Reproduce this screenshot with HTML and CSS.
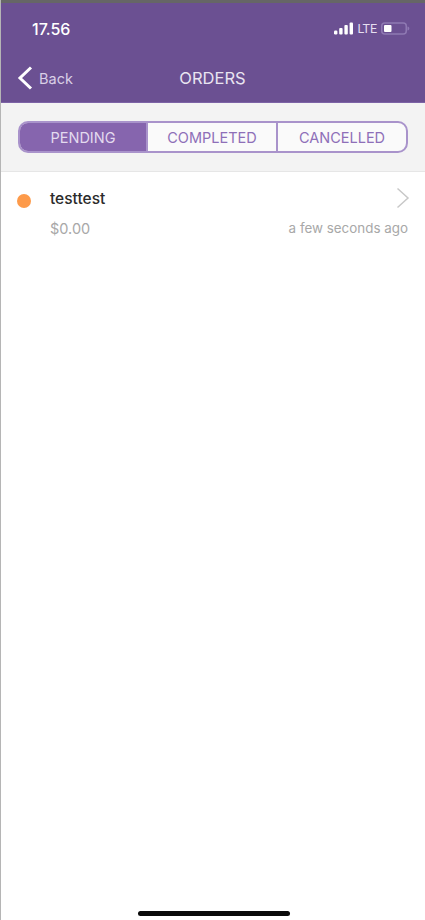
FILE: index.html
```html
<!DOCTYPE html>
<html lang="en">
<head>
    <meta charset="UTF-8">
    <meta name="viewport" content="width=device-width, initial-scale=1.0">
    <title>Orders</title>
    <link rel="stylesheet" href="styles.css">
</head>
<body>
    <div class="phone">
        <header class="header">
            <div class="status-bar">
                <span class="clock">17.56</span>
                <div class="status-icons">
                    <svg class="signal" width="20" height="13" viewBox="0 0 20 13">
                        <rect x="0" y="8.500" width="3.400" height="4" rx="1.200"/>
                        <rect x="5.200" y="6" width="3.400" height="6.500" rx="1"/>
                        <rect x="10.400" y="3" width="3.400" height="9.500" rx="1"/>
                        <rect x="15.600" y="0.500" width="3.400" height="12" rx="1"/>
                    </svg>
                    <span class="network">LTE</span>
                    <svg class="battery" width="29" height="13" viewBox="0 0 29 13">
                        <rect x="0.750" y="1" width="24.500" height="11" rx="3" class="battery-shell"/>
                        <rect x="3" y="3" width="7.500" height="7" rx="1" class="battery-level"/>
                        <path d="M26.500 4.500c1.300.3 1.800 1.100 1.800 2s-.5 1.700-1.800 2z" class="battery-cap"/>
                    </svg>
                </div>
            </div>
            <nav class="nav-bar">
                <a href="#" class="back">
                    <svg width="16" height="24" viewBox="0 0 16 24">
                        <path d="M14 1.500 3 12l11 10.500" fill="none" stroke="#fff" stroke-width="3"/>
                    </svg>
                    <span>Back</span>
                </a>
                <h1 class="title">ORDERS</h1>
            </nav>
        </header>

        <div class="tabs-wrap">
            <div class="tabs">
                <button class="tab tab-active">PENDING</button>
                <button class="tab tab-middle">COMPLETED</button>
                <button class="tab tab-last">CANCELLED</button>
            </div>
        </div>

        <div class="order">
            <span class="order-dot"></span>
            <div class="order-main">
                <div class="order-name">testtest</div>
                <div class="order-price">$0.00</div>
            </div>
            <div class="order-side">
                <svg class="order-arrow" width="14" height="22" viewBox="0 0 14 22">
                    <path d="M1.500 1.500 12 11 1.500 20.500" fill="none" stroke="#c8c8c8" stroke-width="1.500"/>
                </svg>
                <div class="order-time">a few seconds ago</div>
            </div>
        </div>

        <div class="home-indicator"></div>
    </div>
</body>
</html>
```

FILE: styles.css
```css
* {
    margin: 0;
    padding: 0;
    box-sizing: border-box;
}

body {
    font-family: Inter, 'Liberation Sans', Arial, sans-serif;
    background: #fff;
}

.phone {
    height: 920px;
    border-left: 1px solid #b5b5b5;
    display: flex;
    flex-direction: column;
    overflow: hidden;
}

.header {
    height: 103px;
    margin-left: -1px;
    background: #6b5092;
    border-top: 3px solid #666;
    border-bottom: 1px solid #7d63a6;
    color: #fff;
}

.status-bar {
    height: 47px;
    padding: 4px 15px 0 32px;
    display: flex;
    justify-content: space-between;
    align-items: center;
}

.clock {
    font-size: 16px;
    font-weight: 500;
}

.status-icons {
    display: flex;
    align-items: center;
    gap: 4px;
}

.signal {
    fill: #fff;
    margin-right: -1px;
}

.network {
    font-family: Roboto, 'Liberation Sans', sans-serif;
    font-size: 12.500px;
    color: #e6dff0;
}

.battery-shell {
    fill: none;
    stroke: #8f79b3;
    stroke-width: 1.500;
}

.battery-level {
    fill: #fff;
}

.battery-cap {
    fill: #8f79b3;
}

.nav-bar {
    height: 52px;
    padding: 4px 17px 0;
    display: grid;
    grid-template-columns: 1fr auto 1fr;
    align-items: center;
}

.back {
    display: flex;
    align-items: center;
    gap: 6px;
    color: #d9cfe6;
    font-size: 14.500px;
    text-decoration: none;
}

.title {
    font-size: 16.500px;
    font-weight: 400;
    color: #e9e4f1;
}

.tabs-wrap {
    height: 69px;
    padding: 18px 17px 0 17px;
    background: #f3f3f3;
    border-bottom: 1px solid #e6e6e6;
}

.tabs {
    height: 32px;
    display: flex;
    background: #fafafa;
    border: 2px solid #a993cb;
    border-radius: 10px;
    overflow: hidden;
}

.tab {
    font-family: inherit;
    font-size: 14.500px;
    color: #8e6fb8;
    background: none;
    border: none;
}

.tab-active {
    width: 126px;
    background: #8665ae;
    color: #e3daee;
}

.tab-middle {
    width: 132px;
    border-left: 2px solid #a993cb;
    border-right: 2px solid #a993cb;
}

.tab-last {
    flex-grow: 1;
}

.order {
    display: flex;
    padding: 15px 17px 0 16px;
}

.order-dot {
    width: 14px;
    height: 14px;
    margin-top: 7px;
    border-radius: 50%;
    background: #fd9a4a;
}

.order-main {
    margin-left: 19px;
    flex-grow: 1;
}

.order-name {
    font-size: 15.500px;
    font-weight: 500;
    color: #2b2b2b;
    line-height: 24px;
}

.order-price {
    margin-top: 8px;
    font-size: 14.500px;
    color: #a8a8a8;
    line-height: 20px;
}

.order-side {
    display: flex;
    flex-direction: column;
    align-items: flex-end;
}

.order-arrow {
    margin-right: -2px;
}

.order-time {
    margin-top: 9px;
    font-size: 13.400px;
    color: #a8a8a8;
    line-height: 20px;
}

.home-indicator {
    width: 152px;
    height: 5px;
    margin: auto auto 4px 137px;
    background: #0a0a0a;
    border-radius: 3px;
}
```
